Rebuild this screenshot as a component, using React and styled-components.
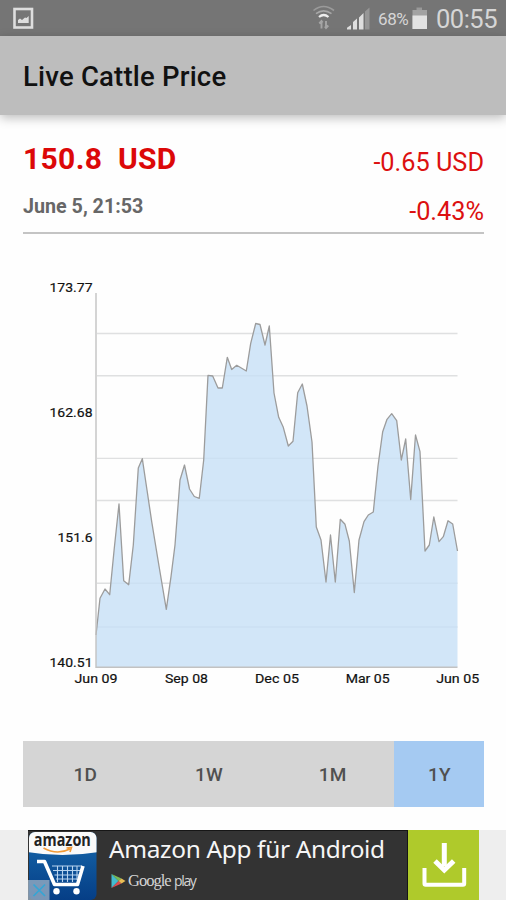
import React from 'react';
import styled, { createGlobalStyle } from 'styled-components';

const GlobalStyle = createGlobalStyle`
  * { box-sizing: border-box; }
  body {
    margin: 0;
    background: #fefefe;
    font-family: Roboto, "Liberation Sans", sans-serif;
  }
`;

const Screen = styled.div`
  width: 506px;
  height: 900px;
  overflow: hidden;
  display: flex;
  flex-direction: column;
  background: #fefefe;
`;

const StatusBar = styled.header`
  height: 36px;
  flex: none;
  display: flex;
  align-items: center;
  justify-content: space-between;
  padding: 0 9px 0 13px;
  background: #757575;
  color: #d6d6d6;
`;

const StatusIcons = styled.div`
  display: flex;
  align-items: center;
  height: 36px;
`;

const Icon = styled.svg`
  display: block;
  flex: none;
  overflow: visible;
  margin-left: ${(p) => p.$gap || 0}px;
`;

const Battery = styled.span`
  margin: 1px 0 0 8px;
  width: 32px;
  font-size: 17px;
  line-height: 20px;
  letter-spacing: -0.4px;
  white-space: nowrap;
`;

const Clock = styled.span`
  margin: 2px 0 0 9px;
  width: 61px;
  font-size: 25.5px;
  line-height: 30px;
  letter-spacing: -0.5px;
  white-space: nowrap;
`;

const AppBar = styled.div`
  height: 79px;
  flex: none;
  display: flex;
  align-items: center;
  padding: 3px 23px 0;
  background: #bdbdbd;
  box-shadow: 0 3px 10px rgba(0, 0, 0, 0.26);
`;

const Title = styled.h1`
  margin: 0;
  font-size: 27.5px;
  font-weight: 500;
  line-height: 32px;
  letter-spacing: 0.2px;
  color: #111;
`;

const Summary = styled.section`
  flex: none;
  height: 119px;
  margin: 0 22px 0 23px;
  padding-top: 26px;
  display: flex;
  justify-content: space-between;
  border-bottom: 2px solid #c4c4c4;
`;

const Column = styled.div`
  display: flex;
  flex-direction: column;
  align-items: ${(p) => (p.$end ? 'flex-end' : 'flex-start')};
  padding-top: ${(p) => (p.$end ? 6 : 0)}px;
`;

const Price = styled.div`
  font-size: 30px;
  font-weight: 700;
  line-height: 36px;
  color: #dc0808;
  letter-spacing: 0.35px;
  white-space: pre;
`;

const Updated = styled.div`
  margin-top: 18px;
  font-size: 19.7px;
  font-weight: 700;
  line-height: 24px;
  color: #676767;
`;

const Change = styled.div`
  flex: none;
  height: 49px;
  font-size: 25.3px;
  line-height: 32px;
  color: #dc1010;

  & + & {
    height: 32px;
  }
`;

const Chart = styled.svg`
  display: block;
  flex: none;
  width: 506px;
  height: 507px;
`;

const AxisLabel = styled.text`
  font-family: Roboto, "Liberation Sans", sans-serif;
  font-size: 13.4px;
  fill: #111;
  stroke: #111;
  stroke-width: 0.2px;
`;

const RangeTabs = styled.nav`
  flex: none;
  height: 66px;
  margin: 0 22px 0 23px;
  display: grid;
  grid-template-columns: repeat(3, 1fr) 90px;
`;

const RangeTab = styled.button`
  border: 0;
  padding: 2px 0 0 1px;
  background: ${(p) => (p.$active ? '#a5caf2' : '#d5d5d5')};
  color: #505050;
  font: 500 19px/22px Roboto, "Liberation Sans", sans-serif;
  letter-spacing: 0.3px;
`;

const AdStrip = styled.footer`
  flex: none;
  height: 70px;
  margin-top: 23px;
  padding: 0 27px 0 28px;
  display: flex;
  background: #eee;
`;

const AdBody = styled.div`
  width: 380px;
  display: flex;
  background: #333;
  border-top: 1px solid #161616;
  border-right: 1px solid #161616;
`;

const AdText = styled.div`
  display: flex;
  flex-direction: column;
  padding-left: 11px;
`;

const AdTitle = styled.div`
  margin-top: 1px;
  font: 400 24.4px/34px "Noto Sans", "Open Sans", sans-serif;
  letter-spacing: -0.32px;
  color: #f6f6f6;
  white-space: nowrap;
`;

const StoreRow = styled.div`
  display: flex;
  align-items: center;
  margin-top: 6px;
  height: 18px;
`;

const StoreName = styled.span`
  margin-left: ${(p) => (p.$light ? 3.5 : 2)}px;
  font: ${(p) =>
    p.$light
      ? '400 14px/18px "Open Sans", sans-serif'
      : '400 16.5px/18px "Liberation Serif", serif'};
  letter-spacing: ${(p) => (p.$light ? -1.4 : -1)}px;
  color: #d5d5d5;
`;

const Download = styled.button`
  width: 71px;
  padding: 0;
  border: 0;
  background: #afca2b;
`;

const points = [
  [96, 635], [100, 598.3], [105, 589], [109.7, 594.7], [114.3, 548], [119, 504],
  [123.7, 580.7], [128.7, 584.7], [133.3, 545], [138.3, 468], [142.3, 458.7],
  [147, 490], [151.7, 521.7], [159, 566], [166.3, 609.3], [171, 576.7], [175, 545],
  [180, 480], [184.5, 465], [189.5, 489], [194.3, 496.5], [199.3, 498.3],
  [203.7, 460], [208, 375.3], [212.7, 376], [218, 388], [222.3, 388],
  [227.3, 357.3], [231.7, 369.5], [236.7, 365.3], [246.3, 371], [250.7, 343.3],
  [255.7, 323.5], [260, 324.5], [265, 345], [269.3, 326], [274, 393],
  [278.7, 417.3], [283.3, 427.3], [288.3, 446], [293, 441.3], [297.7, 392.7],
  [302.3, 384], [307, 406], [312, 442], [316.3, 527], [321, 540], [326, 582],
  [330.5, 535], [335.3, 582], [340.3, 519.3], [345, 524.3], [349.3, 541],
  [354.3, 592.5], [359, 540], [364, 521.7], [368.3, 515], [373.3, 512],
  [378, 466], [382.7, 431.7], [387, 419.3], [391.7, 413.7], [396.7, 420.7],
  [401.3, 460], [405.7, 439], [410.7, 499.5], [415.5, 435], [420, 451.7],
  [425, 551], [429.3, 545], [433.8, 517], [439, 541.7], [443.3, 536.7],
  [448, 520.7], [452.7, 524], [457.5, 551],
];
const line = points.map((p) => p.join(',')).join(' ');
const gridLines = [333.5, 375.8, 458.4, 500.5, 583.3, 627];
const yLabels = [['173.77', 292, 43], ['162.68', 417, 43], ['151.6', 542, 35], ['140.51', 666.5, 43]];
const xLabels = [['Jun 09', 96, 43], ['Sep 08', 186.5, 43], ['Dec 05', 277, 44], ['Mar 05', 367.7, 44], ['Jun 05', 457.7, 43]];

function PriceChart() {
  return (
    <Chart viewBox="0 234 506 507">
      {gridLines.map((y) => (
        <line key={y} x1="97" x2="457.5" y1={y} y2={y} stroke="#e6e6e6" strokeWidth="1.4" />
      ))}
      <polygon points={`96,667 ${line} 457.5,667`} fill="#d2e6f8" />
      {gridLines.map((y) => (
        <line key={y} x1="97" x2="457.5" y1={y} y2={y} stroke="#5c7488" strokeOpacity="0.05" strokeWidth="1.4" />
      ))}
      <polyline points={line} fill="none" stroke="#9c9c9c" strokeWidth="1.3" strokeLinejoin="round" />
      <path d="M96 293V667.3H457.5" fill="none" stroke="#c2c2c2" strokeWidth="1.4" />
      {yLabels.map(([label, y, w]) => (
        <AxisLabel key={label} x="92.5" y={y} textAnchor="end" textLength={w} lengthAdjust="spacingAndGlyphs">{label}</AxisLabel>
      ))}
      {xLabels.map(([label, x, w]) => (
        <AxisLabel key={label} x={x} y="683.3" textAnchor="middle" textLength={w} lengthAdjust="spacingAndGlyphs">{label}</AxisLabel>
      ))}
    </Chart>
  );
}

const BrandWord = styled.text`
  font: 700 18px "Open Sans", "Noto Sans", sans-serif;
  fill: #222;
`;

function ShopIcon() {
  return (
    <Icon width="70" height="69" viewBox="28 831 70 69">
      <defs>
        <linearGradient id="shopBlue" x1="0" y1="0" x2="0" y2="1">
          <stop offset="0" stopColor="#1769ad" />
          <stop offset="1" stopColor="#053e86" />
        </linearGradient>
        <clipPath id="shopTile"><rect x="29" y="832" width="67.5" height="68" rx="6" /></clipPath>
      </defs>
      <g clipPath="url(#shopTile)">
        <rect x="28" y="831" width="70" height="69" fill="url(#shopBlue)" />
        <path d="M28 831H98V852Q62 858 28 852Z" fill="#fafafa" />
      </g>
      <BrandWord x="33.8" y="846" textLength="57" lengthAdjust="spacingAndGlyphs">amazon</BrandWord>
      <path d="M43.5 848Q57 855.5 70 849M66.5 848L71.5 847.5L70 852" fill="none" stroke="#f29b38" strokeWidth="1.6" />
      <path d="M52 866H82M53 870.5H81M54.5 875H79M56 879H77M57.5 866V882M62.5 866V882M67.5 866V882M72.5 866V882M77 866V880" stroke="#b8d4ef" strokeWidth="1.1" />
      <path d="M37 861.5H44.5L54.5 884.5H77.5L83 866" fill="none" stroke="#fff" strokeWidth="3.6" strokeLinejoin="round" />
      <circle cx="56.5" cy="891.3" r="3.2" fill="#fff" />
      <circle cx="76.5" cy="891.3" r="3.2" fill="#fff" />
      <rect x="28" y="880" width="21.5" height="20" fill="#9aafc4" fillOpacity="0.78" />
      <path d="M33.5 884.5L45 896M45 884.5L33.5 896" stroke="#35a5d5" strokeWidth="1.7" />
    </Icon>
  );
}

export default function App() {
  return (
    <Screen>
      <GlobalStyle />
      <StatusBar>
        <Icon width="21" height="22" viewBox="13 7 21 22">
          <rect x="14.5" y="9" width="17.5" height="18.5" fill="none" stroke="#dedede" strokeWidth="2.6" />
          <path d="M18 23V20L20 18.5L22 20L25 17.5L26.5 18L28.7 16V23Z" fill="#dedede" />
        </Icon>
        <StatusIcons>
          <Icon width="24" height="26" viewBox="312 5 24 26">
            <g fill="none" strokeWidth="1.6">
              <path d="M313.5 10.5Q323.5 2.5 334 10.5" stroke="#9a9a9a" />
              <path d="M316 13.7Q323.5 8 331.5 13.7" stroke="#a7a7a7" />
              <path d="M319 17Q323.7 13 328.5 17" stroke="#ededed" strokeWidth="2.2" />
            </g>
            <path d="M321.5 28.5V21M319.3 23.5L321.5 21L322.7 22.5M326 21V28M324.8 26.5L326 28L328.3 25.5" fill="none" stroke="#a5a5a5" strokeWidth="1.9" />
          </Icon>
          <Icon $gap={10} width="24" height="25" viewBox="346 5.5 24 25">
            <path d="M347 29V27.3L351 24.5V29ZM353 29V21.5L357 18V29ZM359 29V17L363.5 12.5V29Z" fill="#dedede" />
            <path d="M365 29V11L369.5 7V29Z" fill="#969696" />
          </Icon>
          <Battery>68%</Battery>
          <Icon $gap={2} width="15" height="23" viewBox="412 6 15 23">
            <path d="M416.5 6.5H422V9H416.5Z" fill="#999" />
            <rect x="412.5" y="9" width="14.5" height="19" fill="#a2a2a2" />
            <rect x="412.5" y="14.5" width="14.5" height="13.5" fill="#e2e2e2" />
          </Icon>
          <Clock>00:55</Clock>
        </StatusIcons>
      </StatusBar>
      <AppBar>
        <Title>Live Cattle Price</Title>
      </AppBar>
      <Summary>
        <Column>
          <Price>{'150.8  USD'}</Price>
          <Updated>June 5, 21:53</Updated>
        </Column>
        <Column $end>
          <Change>-0.65 USD</Change>
          <Change>-0.43%</Change>
        </Column>
      </Summary>
      <PriceChart />
      <RangeTabs>
        <RangeTab>1D</RangeTab>
        <RangeTab>1W</RangeTab>
        <RangeTab>1M</RangeTab>
        <RangeTab $active>1Y</RangeTab>
      </RangeTabs>
      <AdStrip>
        <AdBody>
          <ShopIcon />
          <AdText>
            <AdTitle>Amazon App für Android</AdTitle>
            <StoreRow>
              <Icon $gap={2} width="15" height="16" viewBox="0 0 15 16">
                <path d="M0.5 1V15L7.5 8Z" fill="#43bcd0" />
                <path d="M0.5 1L7.5 8L10.5 5.5Z" fill="#79ba58" />
                <path d="M0.5 15L7.5 8L10.5 10.5Z" fill="#dc4d50" />
                <path d="M10.5 5.5L14.5 8L10.5 10.5L7.5 8Z" fill="#e9bd55" />
              </Icon>
              <StoreName>Google</StoreName>
              <StoreName $light>play</StoreName>
            </StoreRow>
          </AdText>
        </AdBody>
        <Download aria-label="Download">
          <Icon width="71" height="70" viewBox="408 830 71 70">
            <path d="M424.5 868V883.5Q424.5 884.7 425.7 884.7H463Q464.2 884.7 464.2 883.5V868" fill="none" stroke="#fff" strokeWidth="4" />
            <path d="M444.3 843V866" stroke="#fff" strokeWidth="5" />
            <path d="M435 861L444.3 870L453.7 861" fill="none" stroke="#fff" strokeWidth="5" />
          </Icon>
        </Download>
      </AdStrip>
    </Screen>
  );
}
